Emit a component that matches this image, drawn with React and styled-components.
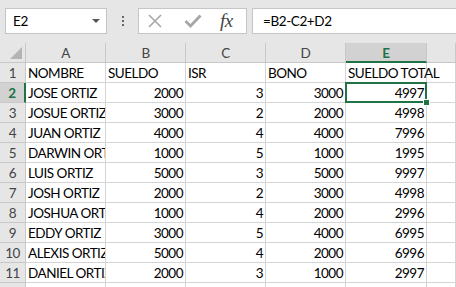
import React from "react";
import styled, { createGlobalStyle } from "styled-components";

const Global = createGlobalStyle`
  html, body { margin: 0; padding: 0; overflow: hidden; background: #ffffff; }
  body { font-family: "Lato", "Liberation Sans", sans-serif; }
`;

const Page = styled.div`
  width: 456px;
  height: 287px;
  overflow: hidden;
  background: #ffffff;
`;

const Toolbar = styled.div`
  height: 43px;
  background: #e6e6e6;
  display: flex;
  align-items: flex-start;
  padding: 8px 0 0 5px;
  box-sizing: border-box;
`;

const NameBox = styled.div`
  width: 102px;
  height: 26px;
  box-sizing: border-box;
  background: #fff;
  border: 1px solid #c6c6c6;
  display: flex;
  align-items: center;
  justify-content: space-between;
  padding: 0 6px 0 7px;
  font-size: 13.5px;
  letter-spacing: -0.4px;
  color: #000;
`;

const Caret = styled.span`
  width: 0;
  height: 0;
  border-left: 4px solid transparent;
  border-right: 4px solid transparent;
  border-top: 4px solid #555;
`;

const Dots = styled.div`
  width: 31px;
  height: 26px;
  display: flex;
  flex-direction: column;
  align-items: center;
  justify-content: center;
  gap: 2px;
`;

const Dot = styled.span`
  width: 2px;
  height: 2px;
  background: #666;
`;

const IconBox = styled.div`
  width: 109px;
  height: 26px;
  box-sizing: border-box;
  background: #fff;
  border: 1px solid #c6c6c6;
  display: flex;
  align-items: center;
  padding: 0 0 0 9px;
`;

const IconSlot = styled.div`
  width: 36px;
  height: 24px;
  display: flex;
  align-items: center;
  justify-content: flex-start;
`;

const Fx = styled.span`
  font-family: "Liberation Serif", "DejaVu Serif", serif;
  font-style: italic;
  font-size: 19px;
  color: #444;
  letter-spacing: -0.5px;
  line-height: 1;
  margin-top: -2px;
`;

const FormulaInput = styled.div`
  flex: 1;
  height: 26px;
  margin-left: 5px;
  box-sizing: border-box;
  background: #fff;
  border: 1px solid #c6c6c6;
  border-right: none;
  display: flex;
  align-items: center;
  padding-left: 10px;
  font-size: 13.5px;
  letter-spacing: -0.4px;
  color: #000;
`;

const Grid = styled.div`
  display: grid;
  grid-template-columns: 26px 80px 80px 80px 80px 81px 1fr;
  grid-auto-rows: 20px;
  font-size: 13.5px;
  letter-spacing: -0.5px;
`;

const Corner = styled.div`
  background: #e6e6e6;
  border-right: 1px solid #c8c8c8;
  border-bottom: 1px solid #c8c8c8;
  box-sizing: border-box;
  position: relative;
  &::after {
    content: "";
    position: absolute;
    right: 3px;
    bottom: 3px;
    width: 0;
    height: 0;
    border-left: 12px solid transparent;
    border-bottom: 12px solid #b4b4b4;
  }
`;

const ColHead = styled.div`
  background: ${(p) => (p.$active ? "#d2d2d2" : "#e6e6e6")};
  color: ${(p) => (p.$active ? "#217346" : "#444")};
  font-weight: ${(p) => (p.$active ? 700 : 400)};
  border-right: 1px solid #c8c8c8;
  border-bottom: ${(p) => (p.$active ? "2px solid #217346" : "1px solid #c8c8c8")};
  box-sizing: border-box;
  display: flex;
  align-items: center;
  justify-content: center;
  padding-top: ${(p) => (p.$active ? "1px" : "0")};
`;

const RowHead = styled.div`
  background: ${(p) => (p.$active ? "#d2d2d2" : "#e6e6e6")};
  color: ${(p) => (p.$active ? "#217346" : "#444")};
  font-weight: ${(p) => (p.$active ? 700 : 400)};
  border-right: ${(p) => (p.$active ? "2px solid #217346" : "1px solid #c8c8c8")};
  border-bottom: 1px solid #c8c8c8;
  box-sizing: border-box;
  display: flex;
  align-items: center;
  justify-content: center;
`;

const Cell = styled.div`
  border-right: 1px solid #d4d4d4;
  border-bottom: 1px solid #d4d4d4;
  box-sizing: border-box;
  display: flex;
  align-items: center;
  justify-content: ${(p) => (p.$num ? "flex-end" : "flex-start")};
  padding: ${(p) => (p.$num ? "0 2px 0 0" : "0 0 0 2px")};
  white-space: nowrap;
  overflow: ${(p) => (p.$overflow ? "visible" : "hidden")};
  color: #000;
  position: relative;
  ${(p) =>
    p.$selected &&
    `
    &::before {
      content: "";
      position: absolute;
      left: -1px;
      top: -1px;
      right: -1px;
      bottom: -1px;
      border: 2px solid #217346;
      pointer-events: none;
    }
    &::after {
      content: "";
      position: absolute;
      right: -4px;
      bottom: -4px;
      width: 5px;
      height: 5px;
      background: #217346;
      border: 1px solid #fff;
      z-index: 2;
    }
  `}
`;

const rows = [
  ["NOMBRE", "SUELDO", "ISR", "BONO", "SUELDO TOTAL"],
  ["JOSE ORTIZ", 2000, 3, 3000, 4997],
  ["JOSUE ORTIZ", 3000, 2, 2000, 4998],
  ["JUAN ORTIZ", 4000, 4, 4000, 7996],
  ["DARWIN ORTIZ", 1000, 5, 1000, 1995],
  ["LUIS ORTIZ", 5000, 3, 5000, 9997],
  ["JOSH ORTIZ", 2000, 2, 3000, 4998],
  ["JOSHUA ORTIZ", 1000, 4, 2000, 2996],
  ["EDDY ORTIZ", 3000, 5, 4000, 6995],
  ["ALEXIS ORTIZ", 5000, 4, 2000, 6996],
  ["DANIEL ORTIZ", 2000, 3, 1000, 2997],
  ["", "", "", "", ""],
];

const cols = ["A", "B", "C", "D", "E", ""];

export default function App() {
  return (
    <Page>
      <Global />
      <Toolbar>
        <NameBox>
          <span>E2</span>
          <Caret />
        </NameBox>
        <Dots>
          <Dot />
          <Dot />
          <Dot />
        </Dots>
        <IconBox>
          <IconSlot>
            <svg width="14" height="14" viewBox="0 0 14 14">
              <path d="M1 1 L13 13 M13 1 L1 13" stroke="#a6a6a6" strokeWidth="1.6" fill="none" />
            </svg>
          </IconSlot>
          <IconSlot>
            <svg width="18" height="14" viewBox="0 0 18 14">
              <path d="M1.5 7 L6.5 12 L16.5 1.5" stroke="#a6a6a6" strokeWidth="2.8" fill="none" />
            </svg>
          </IconSlot>
          <Fx>fx</Fx>
        </IconBox>
        <FormulaInput>=B2-C2+D2</FormulaInput>
      </Toolbar>
      <Grid>
        <Corner />
        {cols.map((c, i) => (
          <ColHead key={i} $active={c === "E"}>
            {c}
          </ColHead>
        ))}
        {rows.map((r, ri) => (
          <React.Fragment key={ri}>
            <RowHead $active={ri === 1}>{ri + 1}</RowHead>
            {r.map((v, ci) => (
              <Cell
                key={ci}
                $num={typeof v === "number"}
                $overflow={ci === 4}
                $selected={ri === 1 && ci === 4}
              >
                {v}
              </Cell>
            ))}
            <Cell />
          </React.Fragment>
        ))}
      </Grid>
    </Page>
  );
}
